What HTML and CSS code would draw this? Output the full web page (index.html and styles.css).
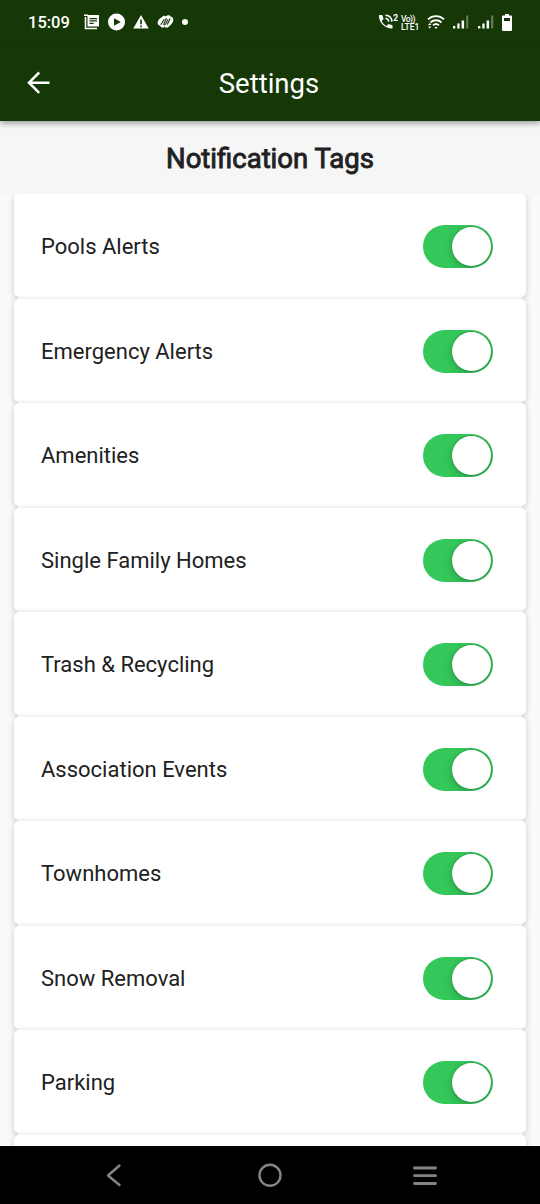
FILE: index.html
```html
<!DOCTYPE html>
<html lang="en">
<head>
<meta charset="utf-8">
<title>Settings</title>
<link rel="stylesheet" href="styles.css">
</head>
<body>
	<div class="status-bar">
		<span class="clock">15:09</span>
		<div class="status-left">
			<svg width="16" height="16" viewBox="0 0 16 16">
				<path fill="#fff" fill-rule="evenodd" d="M3.500 1H15v11.500H3.500zM5.500 4v1.200H13V4zM5.500 6.300v1.200H13V6.300zM5.500 8.700v1.200h4.200V8.700z"/>
				<path fill="none" stroke="#fff" stroke-width="1.500" d="M0 1.200h4M1.500 3v11.500H13"/>
			</svg>
			<svg width="18" height="18" viewBox="0 0 18 18">
				<circle cx="8.500" cy="9" r="8.500" fill="#fff"/>
				<path fill="#163807" d="M6 5.300L12.800 9 6 12.700z"/>
			</svg>
			<svg width="16" height="16" viewBox="0 0 16 16">
				<path fill="#fff" d="M8 1l7.700 13.600H.3z"/>
				<path fill="#163807" d="M7.200 5.500h1.600v4.800H7.200zM7.200 11.600h1.600v1.600H7.200z"/>
			</svg>
			<svg width="17" height="16" viewBox="0 0 17 16">
				<path fill="#fff" d="M4.500 3.500C6 1.500 8 1.200 9 2.500c1.200-1.800 3.800-1.700 4.600.1 2 .2 3.200 2.200 2.600 4.200-.7 2.400-2 4-3.800 5.300-1.500 1.600-3.300 2.200-4.600.6-1.700 1.500-4 1-4.400-.8C1 11.300.1 9.400.8 7.700 1.500 5.600 2.700 4.200 4.500 3.500z"/>
				<path fill="none" stroke="#163807" stroke-width="1.100" stroke-linecap="round" d="M4 10.500L7 5.500M9.300 4.500L7 9.500c-.6 1.600.7 2 1.500.6l2.300-4.300M13 4.800l-2.600 5.400"/>
			</svg>
			<span class="more-dot"></span>
		</div>
		<div class="status-right">
			<svg class="call" width="20" height="18" viewBox="0 0 20 18">
				<path fill="#fff" d="M1 2h3.300l1.300 4-2 1.900c1.100 2.300 2.800 4 5 5l1.900-2 4 1.300v3.200C7 15.800.5 9.500 1 2z"/>
				<path fill="none" stroke="#fff" stroke-width="1.500" d="M7.500 2.200c3.800.2 6.200 2.600 6.400 6.400M7.400 5.200c2 .2 3.200 1.400 3.400 3.400"/>
				<text x="15" y="8" class="call-num">2</text>
			</svg>
			<span class="volte"><span class="volte-top">Vo))</span><span>LTE1</span></span>
			<svg class="wifi" width="18" height="16" viewBox="0 0 18 16">
				<g fill="none" stroke="#fff" stroke-width="1.800">
					<path d="M1 5.300c4.500-4.300 11.500-4.300 16 0"/>
					<path d="M3.500 8.500c3.200-3 7.800-3 11 0"/>
					<path d="M6 11.300c1.700-1.500 4.300-1.500 6 0"/>
				</g>
				<path fill="#fff" d="M7.300 13h3.400L9 15zM1 11l1.700-2 1.700 2zM1 12.500h3.400l-1.700 2z"/>
			</svg>
			<svg class="signal" width="16" height="16" viewBox="0 0 16 16">
				<path fill="#fff" d="M0 12h2.300v2.500H0zM4.300 9.500h2.300v5H4.300zM8.600 6.500h2.500v8H8.600z"/>
				<path fill="#68805e" d="M13.200 1.500h2v13h-2z"/>
			</svg>
			<svg class="signal" width="16" height="16" viewBox="0 0 16 16">
				<path fill="#fff" d="M0 12h2.300v2.500H0zM4.300 9.500h2.300v5H4.300zM8.600 6.500h2.500v8H8.600z"/>
				<path fill="#68805e" d="M13.200 1.500h2v13h-2z"/>
			</svg>
			<svg width="10" height="17" viewBox="0 0 10 17">
				<path fill="#fff" fill-rule="evenodd" d="M3 0h4v1.500h2q1 0 1 1V16q0 1-1 1H1q-1 0-1-1V2.500q0-1 1-1h2zM2 4v3h6V4z"/>
			</svg>
		</div>
	</div>

	<div class="header">
		<svg class="back" width="24" height="24" viewBox="0 0 24 24">
			<path fill="none" stroke="#fff" stroke-width="2.500" d="M13.200 1.500L3 11.700l10.200 10.200M3 11.700h20.500"/>
		</svg>
		<h1>Settings</h1>
	</div>

	<div class="content">
		<h2>Notification Tags</h2>
		<div class="list">
			<div class="card"><span>Pools Alerts</span><span class="switch"></span></div>
			<div class="card"><span>Emergency Alerts</span><span class="switch"></span></div>
			<div class="card"><span>Amenities</span><span class="switch"></span></div>
			<div class="card"><span>Single Family Homes</span><span class="switch"></span></div>
			<div class="card"><span>Trash &amp; Recycling</span><span class="switch"></span></div>
			<div class="card"><span>Association Events</span><span class="switch"></span></div>
			<div class="card"><span>Townhomes</span><span class="switch"></span></div>
			<div class="card"><span>Snow Removal</span><span class="switch"></span></div>
			<div class="card"><span>Parking</span><span class="switch"></span></div>
			<div class="card"></div>
		</div>
	</div>

	<div class="nav-bar">
		<svg width="24" height="24" viewBox="0 0 24 24">
			<path fill="none" stroke="#858585" stroke-width="2.400" stroke-linecap="round" stroke-linejoin="round" d="M16.500 2.500L5 12.500l11.500 9.500"/>
		</svg>
		<svg width="24" height="24" viewBox="0 0 24 24">
			<circle cx="12" cy="12.300" r="10.500" fill="none" stroke="#858585" stroke-width="2.400"/>
		</svg>
		<svg width="24" height="24" viewBox="0 0 24 24">
			<path fill="none" stroke="#858585" stroke-width="2.800" stroke-linecap="round" d="M1.500 5h21M1.500 12.700h21M1.500 20.500h21"/>
		</svg>
	</div>
</body>
</html>
```
FILE: styles.css
```css
* {
	box-sizing: border-box;
}
body {
	margin: 0;
	height: 1204px;
	display: flex;
	flex-direction: column;
	overflow: hidden;
	background-color: #fafafa;
	font-family: Roboto, "Liberation Sans", sans-serif;
	color: #212121;
}
svg {
	display: block;
	flex: none;
}
.status-bar {
	height: 44px;
	flex: none;
	display: flex;
	align-items: center;
	padding: 0 28px;
	background-color: #163807;
	color: #fff;
}
.clock {
	width: 56px;
	font-size: 16.5px;
	line-height: 20px;
	padding-top: 2px;
	font-weight: 500;
}
.status-left {
	display: flex;
	align-items: center;
	gap: 7.5px;
}
.more-dot {
	width: 6px;
	height: 6px;
	margin-left: 1px;
	border-radius: 50%;
	background-color: #fff;
}
.status-right {
	display: flex;
	align-items: center;
	margin-left: auto;
}
.call {
	margin-right: 3px;
}
.call-num {
	font-size: 9px;
	font-weight: 700;
	fill: #fff;
}
.volte {
	width: 19px;
	padding-top: 1px;
	font-size: 8.5px;
	font-weight: 500;
	line-height: 8px;
	white-space: nowrap;
}
.volte span {
	display: block;
}
.volte .volte-top {
	letter-spacing: -0.5px;
}
.wifi {
	margin: 0 8px 0 7px;
}
.signal {
	margin-right: 8.5px;
}
.header {
	position: relative;
	z-index: 2;
	height: 77px;
	flex: none;
	display: flex;
	align-items: center;
	padding: 0 26px;
	background-color: #163807;
	color: #fff;
	box-shadow: 0 2px 6px rgba(0, 0, 0, 0.4);
}
.header h1 {
	flex: 1;
	margin: 0 26px 0 0;
	padding-top: 2px;
	font-size: 27.5px;
	font-weight: 400;
	line-height: 32px;
	text-align: center;
}
.content {
	flex: 1;
	min-height: 0;
	overflow: hidden;
}
.content h2 {
	position: relative;
	z-index: 1;
	height: 73px;
	margin: 0;
	padding-top: 22px;
	background-color: #f6f6f6;
	font-size: 27.5px;
	font-weight: 400;
	line-height: 32px;
	text-align: center;
	-webkit-text-stroke: 0.9px #212121;
}
.list {
	padding: 0 14px;
	display: flex;
	flex-direction: column;
	gap: 1.5px;
}
.card {
	position: relative;
	height: 103px;
	flex: none;
	display: flex;
	align-items: center;
	justify-content: space-between;
	padding: 2px 33px 0 27px;
	border-radius: 5px;
	background-color: #fff;
	box-shadow: 0 2px 7px rgba(0, 0, 0, 0.2);
	font-size: 22px;
}
/* light line between two cards, the shadow stays visible at the corners */
.card + .card::before {
	content: "";
	position: absolute;
	left: 4px;
	right: 4px;
	top: -2px;
	height: 2px;
	background-color: #f3f3f3;
}
.switch {
	width: 70px;
	height: 43px;
	padding: 2px;
	border-radius: 22px;
	background-color: #34c759;
	overflow: hidden;
}
.switch::after {
	content: "";
	display: block;
	width: 39px;
	height: 39px;
	margin-left: auto;
	border-radius: 50%;
	background-color: #fff;
	box-shadow: 0 3px 8px rgba(0, 0, 0, 0.2), 0 0 2px rgba(0, 0, 0, 0.3);
}
.nav-bar {
	height: 58px;
	flex: none;
	display: flex;
	align-items: center;
	justify-content: space-between;
	padding: 0 103px;
	background-color: #000;
}
```
